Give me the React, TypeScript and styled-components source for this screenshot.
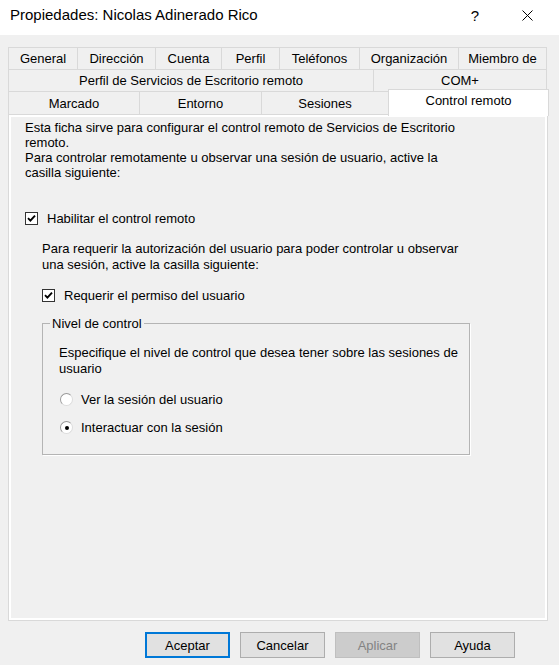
import styled, { createGlobalStyle } from "styled-components";

const GlobalStyle = createGlobalStyle`
  html, body {
    margin: 0;
    padding: 0;
    background: #f0f0f0;
  }
  body {
    font-family: "Liberation Sans", Arial, sans-serif;
    font-size: 13px;
    color: #000;
  }
`;

interface TabItem {
  label: string;
  width: number;
  selected?: boolean;
}

const tabRows: TabItem[][] = [
  [
    { label: "General", width: 69 },
    { label: "Dirección", width: 78 },
    { label: "Cuenta", width: 66 },
    { label: "Perfil", width: 58 },
    { label: "Teléfonos", width: 80 },
    { label: "Organización", width: 99 },
    { label: "Miembro de", width: 88 },
  ],
  [
    { label: "Perfil de Servicios de Escritorio remoto", width: 365 },
    { label: "COM+", width: 173 },
  ],
  [
    { label: "Marcado", width: 131 },
    { label: "Entorno", width: 122 },
    { label: "Sesiones", width: 127 },
    { label: "Control remoto", width: 160, selected: true },
  ],
];

const buttons = [
  { label: "Aceptar", variant: "default" as const },
  { label: "Cancelar", variant: "normal" as const },
  { label: "Aplicar", variant: "disabled" as const },
  { label: "Ayuda", variant: "normal" as const },
];

function CheckMark() {
  return (
    <svg width="9" height="9" viewBox="0 0 9 9">
      <path d="M1 4.2 L3.4 6.6 L8 1.6" fill="none" stroke="#000" strokeWidth="1.9" />
    </svg>
  );
}

function App() {
  return (
    <Window>
      <GlobalStyle />
      <TitleBar>
        <Title>Propiedades: Nicolas Adinerado Rico</Title>
        <TitleButton>?</TitleButton>
        <TitleButton $close>
          <svg width="11" height="11" viewBox="0 0 11 11">
            <path d="M0.5 0.5 L10.5 10.5 M10.5 0.5 L0.5 10.5" stroke="#000" strokeWidth="1" />
          </svg>
        </TitleButton>
      </TitleBar>

      <Body>
        <Tabs>
          {tabRows.map((row, r) => (
            <TabRow key={r} $last={r === tabRows.length - 1}>
              {row.map((tab) => (
                <Tab key={tab.label} $width={tab.width} $selected={tab.selected}>
                  {tab.label}
                </Tab>
              ))}
            </TabRow>
          ))}
        </Tabs>

        <Panel>
          <Text>
            Esta ficha sirve para configurar el control remoto de Servicios de Escritorio
            <br />
            remoto.
          </Text>
          <Text>
            Para controlar remotamente u observar una sesión de usuario, active la
            <br />
            casilla siguiente:
          </Text>

          <CheckRow $top={31}>
            <CheckBox>
              <CheckMark />
            </CheckBox>
            Habilitar el control remoto
          </CheckRow>

          <Indented>
            <Text $lineHeight={16}>
              Para requerir la autorización del usuario para poder controlar u observar
              <br />
              una sesión, active la casilla siguiente:
            </Text>

            <CheckRow $top={15}>
              <CheckBox>
                <CheckMark />
              </CheckBox>
              Requerir el permiso del usuario
            </CheckRow>

            <Group>
              <Legend>Nivel de control</Legend>
              <Text $lineHeight={16}>
                Especifique el nivel de control que desea tener sobre las sesiones de
                <br />
                usuario
              </Text>
              <RadioRow $top={15}>
                <Radio />
                Ver la sesión del usuario
              </RadioRow>
              <RadioRow $top={13}>
                <Radio $checked />
                Interactuar con la sesión
              </RadioRow>
            </Group>
          </Indented>
        </Panel>

        <ButtonBar>
          {buttons.map((b) => (
            <Button key={b.label} $variant={b.variant}>
              {b.label}
            </Button>
          ))}
        </ButtonBar>
      </Body>
    </Window>
  );
}

const Window = styled.div`
  width: 559px;
  height: 665px;
  display: flex;
  flex-direction: column;
  background: #f0f0f0;
  overflow: hidden;
`;

const TitleBar = styled.div`
  height: 35px;
  background: #fff;
  display: flex;
  align-items: flex-start;
  padding-left: 10px;
  box-sizing: border-box;
`;

const Title = styled.div`
  flex: 1;
  font-size: 15px;
  line-height: 30px;
  color: #000;
`;

const TitleButton = styled.div<{ $close?: boolean }>`
  width: 46px;
  height: 30px;
  display: flex;
  align-items: center;
  justify-content: center;
  font-size: 15px;
  color: #000;
  margin-left: ${(p) => (p.$close ? 6 : 0)}px;
  margin-right: ${(p) => (p.$close ? 9 : 0)}px;
`;

const Body = styled.div`
  flex: 1;
  display: flex;
  flex-direction: column;
  padding: 12px 0 0 8px;
`;

const Tabs = styled.div`
  display: flex;
  flex-direction: column;
  position: relative;
  z-index: 1;
`;

const TabRow = styled.div<{ $last?: boolean }>`
  display: flex;
  height: ${(p) => (p.$last ? 23 : 22)}px;
  align-items: flex-start;
`;

const Tab = styled.div<{ $width: number; $selected?: boolean }>`
  box-sizing: border-box;
  width: ${(p) => p.$width + 1}px;
  height: ${(p) => (p.$selected ? "27px" : "100%")};
  margin-right: -1px;
  margin-top: ${(p) => (p.$selected ? -2 : 0)}px;
  border: 1px solid #d9d9d9;
  border-bottom: none;
  background: ${(p) => (p.$selected ? "#fff" : "#f0f0f0")};
  display: flex;
  justify-content: center;
  align-items: ${(p) => (p.$selected ? "flex-start" : "center")};
  padding-top: ${(p) => (p.$selected ? 3 : 0)}px;
  font-size: 13px;
  white-space: nowrap;
  position: relative;
`;

const Panel = styled.div`
  box-sizing: border-box;
  width: 540px;
  height: 507px;
  border: 1px solid #d9d9d9;
  box-shadow: inset 0 0 0 2px #fff;
  background: #f0f0f0;
  padding: 5px 0 0 16px;
  display: flex;
  flex-direction: column;
`;

const Text = styled.div<{ $lineHeight?: number }>`
  line-height: ${(p) => p.$lineHeight ?? 15}px;
  white-space: nowrap;
`;

const CheckRow = styled.label<{ $top: number }>`
  display: flex;
  align-items: center;
  gap: 9px;
  height: 15px;
  margin-top: ${(p) => p.$top}px;
`;

const CheckBox = styled.span`
  box-sizing: border-box;
  width: 13px;
  height: 13px;
  border: 1px solid #333;
  background: #fff;
  display: flex;
  align-items: center;
  justify-content: center;
`;

const Indented = styled.div`
  display: flex;
  flex-direction: column;
  margin-left: 17px;
  margin-top: 15px;
`;

const Group = styled.fieldset`
  box-sizing: border-box;
  width: 428px;
  height: 139px;
  margin: 13px 0 0 0;
  padding: 14px 0 0 16px;
  border: 1px solid #b4b4b4;
  box-shadow: 1px 1px 0 #fff;
  display: flex;
  flex-direction: column;
`;

const Legend = styled.legend`
  padding: 0 2px;
  margin-left: -9px;
  line-height: 15px;
`;

const RadioRow = styled.label<{ $top: number }>`
  display: flex;
  align-items: center;
  gap: 8px;
  height: 15px;
  margin-top: ${(p) => p.$top}px;
  margin-left: 1px;
`;

const Radio = styled.span<{ $checked?: boolean }>`
  box-sizing: border-box;
  width: 13px;
  height: 13px;
  border-radius: 50%;
  border: 1px solid #9a9a9a;
  border-right-color: #dcdcdc;
  border-bottom-color: #dcdcdc;
  background: #fff;
  display: flex;
  align-items: center;
  justify-content: center;
  &::after {
    content: "";
    width: 4px;
    height: 4px;
    border-radius: 50%;
    background: ${(p) => (p.$checked ? "#000" : "transparent")};
  }
`;

const ButtonBar = styled.div`
  display: flex;
  gap: 10px;
  margin-top: 11px;
  padding-left: 137px;
`;

const Button = styled.div<{ $variant: "default" | "normal" | "disabled" }>`
  box-sizing: border-box;
  width: 85px;
  height: 26px;
  display: flex;
  align-items: center;
  justify-content: center;
  font-size: 13px;
  background: ${(p) => (p.$variant === "disabled" ? "#cccccc" : "#e1e1e1")};
  color: ${(p) => (p.$variant === "disabled" ? "#838383" : "#000")};
  border: ${(p) =>
    p.$variant === "default"
      ? "2px solid #0078d7"
      : p.$variant === "disabled"
      ? "1px solid #bfbfbf"
      : "1px solid #adadad"};
`;

export default App;
